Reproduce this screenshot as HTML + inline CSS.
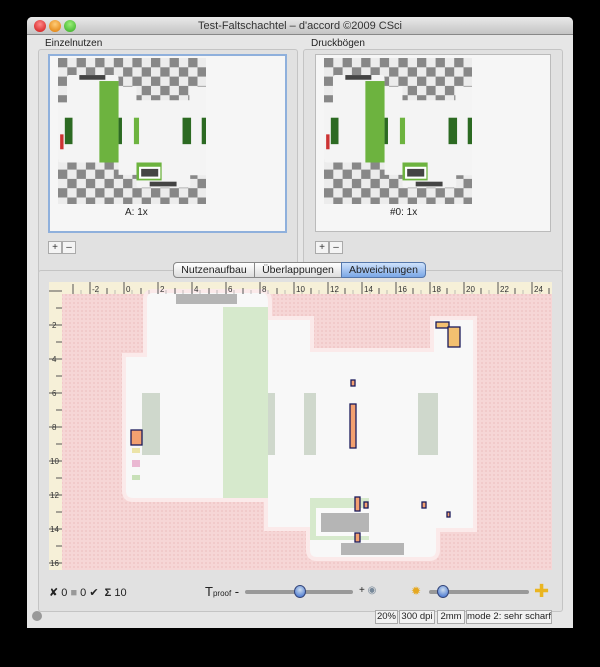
<!DOCTYPE html>
<html><head><meta charset="utf-8"><style>
*{margin:0;padding:0;box-sizing:border-box}
body{width:600px;height:667px;background:#000;position:relative;overflow:hidden;font-family:"Liberation Sans",sans-serif;font-size:10px;color:#222}
.a{position:absolute}
.win{left:27px;top:17px;width:546px;height:611px;background:#e6e6e6;border-radius:5px 5px 0 0;overflow:hidden}
.tb{left:0;top:0;width:546px;height:18px;background:linear-gradient(#e9e9e9,#c4c4c4);border-bottom:1px solid #888;text-align:center;font-size:11px;line-height:18px;color:#333}
.dot{width:12px;height:12px;border-radius:50%;top:3px}
.grp{border:1px solid #c4c4c4;background:#e1e1e1;border-radius:3px}
.pan{background:#f6f6f6;border:1px solid #bbb}
.btn{width:14px;height:13px;background:#f4f4f4;border:1px solid #aaa;font-size:10px;line-height:11px;text-align:center;color:#333}
.tab{top:245px;height:16px;border:1px solid #888;background:linear-gradient(#fff,#ddd);font-size:10.5px;line-height:14px;text-align:center}
.st{top:593px;height:14px;border:1px solid #aaa;background:#f2f2f2;font-size:9.5px;line-height:12px;text-align:center}
</style></head><body>
<svg width="0" height="0" style="position:absolute"><defs>
<pattern id="ck" width="18.6" height="18.6" patternUnits="userSpaceOnUse"><rect width="18.6" height="18.6" fill="#ececec"/><rect width="9.3" height="9.3" fill="#888"/><rect x="9.3" y="9.3" width="9.3" height="9.3" fill="#888"/></pattern>
<pattern id="pk" width="4" height="4" patternUnits="userSpaceOnUse"><rect width="4" height="4" fill="#f6d6d6"/><rect width="2" height="2" fill="#f1caca"/></pattern>
<path id="die" d="M104 11H213Q219 11 219 20V38H261V70H385V38H424V246H387V268Q387 275 380 275H268Q261 275 261 268V245H219V216H84Q77 216 77 209V75H98V17Q98 11 104 11Z"/>
<g id="th">
<rect width="148" height="146" fill="url(#ck)"/>
<g transform="scale(0.4265) translate(-77,29)">
 <use href="#die" fill="#f4f4f4"/>
 <rect x="174" y="25" width="45" height="191" fill="#6db33f"/>
 <rect x="93" y="111" width="18" height="62" fill="#2c6a22"/><rect x="219" y="111" width="8" height="62" fill="#2c6a22"/><rect x="255" y="111" width="12" height="62" fill="#6db33f"/><rect x="369" y="111" width="20" height="62" fill="#2c6a22"/><rect x="414" y="111" width="10" height="62" fill="#2c6a22"/>
 <rect x="261" y="216" width="59" height="42" fill="#6db33f"/><rect x="267" y="226" width="50" height="28" fill="#fff"/>
 <rect x="272" y="231" width="40" height="18" fill="#444"/><rect x="292" y="261" width="63" height="11" fill="#444"/><rect x="127" y="11" width="61" height="11" fill="#444"/>
 <rect x="82" y="150" width="8" height="35" fill="#c33"/>
</g>
</g></defs></svg>
<div class="a win">
 <div class="a tb">Test-Faltschachtel – d'accord ©2009 CSci</div>
 <div class="a dot" style="left:7px;background:radial-gradient(circle at 50% 35%,#f88,#c11)"></div>
 <div class="a dot" style="left:22px;background:radial-gradient(circle at 50% 35%,#fc7,#d70)"></div>
 <div class="a dot" style="left:37px;background:radial-gradient(circle at 50% 35%,#9e7,#3a2)"></div>
 <div class="a" style="left:18px;top:21px">Einzelnutzen</div>
 <div class="a" style="left:284px;top:21px">Druckbögen</div>
 <div class="a grp" style="left:11px;top:32px;width:260px;height:225px"></div>
 <div class="a grp" style="left:276px;top:32px;width:260px;height:225px"></div>
 <div class="a pan" style="left:21px;top:37px;width:239px;height:179px;border:2px solid #8fb0dc"></div>
 <div class="a pan" style="left:288px;top:37px;width:236px;height:178px"></div>
 <svg class="a" style="left:31px;top:41px" width="148" height="146"><use href="#th"/></svg>
 <svg class="a" style="left:297px;top:41px" width="148" height="146"><use href="#th"/></svg>
 <div class="a" style="left:98px;top:190px;font-size:10px">A: 1x</div>
 <div class="a" style="left:363px;top:190px;font-size:10px">#0: 1x</div>
 <div class="a btn" style="left:21px;top:224px">+</div><div class="a btn" style="left:35px;top:224px">–</div>
 <div class="a btn" style="left:288px;top:224px">+</div><div class="a btn" style="left:302px;top:224px">–</div>
 <div class="a grp" style="left:11px;top:253px;width:525px;height:342px"></div>
 <div class="a tab" style="left:146px;width:82px;border-radius:4px 0 0 4px">Nutzenaufbau</div>
 <div class="a tab" style="left:227px;width:88px">Überlappungen</div>
 <div class="a tab" style="left:314px;width:85px;border-radius:0 4px 4px 0;background:linear-gradient(#cfe2fb,#7aa7e6);border-color:#5577aa">Abweichungen</div>
 <svg class="a" style="left:22px;top:265px" width="503" height="288">
  <rect width="503" height="288" fill="#f6f0d8"/>
  <rect x="13" y="12" width="490" height="276" fill="url(#pk)"/>
  <use href="#die" fill="#f8f8f8" stroke="#fbeaea" stroke-width="8"/>
  <use href="#die" fill="#f8f8f8"/>
  <rect x="174" y="25" width="45" height="191" fill="#d6e9cc"/>
  <rect x="93" y="111" width="18" height="62" fill="#cfd8cc"/><rect x="219" y="111" width="7" height="62" fill="#cfd8cc"/><rect x="255" y="111" width="12" height="62" fill="#cfd8cc"/><rect x="369" y="111" width="20" height="62" fill="#cfd8cc"/>
  <rect x="261" y="216" width="59" height="42" fill="#d6e9cc"/><rect x="267" y="226" width="53" height="28" fill="#fafafa"/>
  <g fill="#b5b5b5"><rect x="127" y="12" width="61" height="10"/><rect x="272" y="231" width="48" height="19"/><rect x="292" y="261" width="63" height="12"/></g>
  <g stroke="#1a1a5a" stroke-width="1.3">
   <rect x="82" y="148" width="11" height="15" fill="#f3a070"/><rect x="387" y="40" width="13" height="6" fill="#f3c070"/><rect x="399" y="45" width="12" height="20" fill="#f3c070"/>
   <rect x="302" y="98" width="4" height="6" fill="#f3a070"/><rect x="301" y="122" width="6" height="44" fill="#f3a070"/>
   <rect x="306" y="215" width="5" height="14" fill="#f3a070"/><rect x="315" y="220" width="4" height="6" fill="#f3a070"/><rect x="373" y="220" width="4" height="6" fill="#f3a070"/><rect x="398" y="230" width="3" height="5" fill="#f3a070"/><rect x="306" y="251" width="5" height="9" fill="#f3a070"/>
  </g>
  <rect x="83" y="166" width="8" height="5" fill="#ece4a8"/><rect x="83" y="178" width="8" height="7" fill="#eab8d2"/><rect x="83" y="193" width="8" height="5" fill="#c8e0b8"/>
  <g stroke="#555" stroke-width="1">
   <path d="M24 2V12M41 0V12M58 6V12M75 0V12M92 6V12M109 0V12M126 6V12M143 0V12M160 6V12M177 0V12M194 6V12M211 0V12M228 6V12M245 0V12M262 6V12M279 0V12M296 6V12M313 0V12M330 6V12M347 0V12M364 6V12M381 0V12M398 6V12M415 0V12M432 6V12M449 0V12M466 6V12M483 0V12M500 6V12"/>
   <path d="M0 9H13M7 26H13M0 43H13M7 60H13M0 77H13M7 94H13M0 111H13M7 128H13M0 145H13M7 162H13M0 179H13M7 196H13M0 213H13M7 230H13M0 247H13M7 264H13M0 281H13"/>
  </g>
  <g stroke="#999" stroke-width=".6"><path d="M32 8V12M49 8V12M66 8V12M83 8V12M100 8V12M117 8V12M134 8V12M151 8V12M168 8V12M185 8V12M202 8V12M219 8V12M236 8V12M253 8V12M270 8V12M287 8V12M304 8V12M321 8V12M338 8V12M355 8V12M372 8V12M389 8V12M406 8V12M423 8V12M440 8V12M457 8V12M474 8V12M491 8V12"/></g>
  <g font-size="8" fill="#333" font-family="Liberation Sans">
   <text x="43" y="10">-2</text><text x="77" y="10">0</text><text x="111" y="10">2</text><text x="145" y="10">4</text><text x="179" y="10">6</text><text x="213" y="10">8</text><text x="247" y="10">10</text><text x="281" y="10">12</text><text x="315" y="10">14</text><text x="349" y="10">16</text><text x="383" y="10">18</text><text x="417" y="10">20</text><text x="451" y="10">22</text><text x="485" y="10">24</text>
   <text x="3" y="46">2</text><text x="3" y="80">4</text><text x="3" y="114">6</text><text x="3" y="148">8</text><text x="1" y="182">10</text><text x="1" y="216">12</text><text x="1" y="250">14</text><text x="1" y="284">16</text>
  </g>
 </svg>
 <div class="a" style="left:22px;top:569px;font-size:11px;width:130px">✘ 0 <span style="color:#999">■</span> 0 ✔ &nbsp;<b>Σ</b> 10</div>
 <div class="a" style="left:178px;top:567px;font-size:13px">T<span style="font-size:8px">proof</span> -</div>
 <div class="a" style="left:218px;top:573px;width:108px;height:4px;background:#999;border-radius:2px"></div>
 <div class="a" style="left:267px;top:568px;width:12px;height:13px;border-radius:50%;background:radial-gradient(circle at 50% 35%,#cde,#36c);border:1px solid #347"></div>
 <div class="a" style="left:332px;top:568px;font-size:10px">+ <span style="color:#789">◉</span></div>
 <div class="a" style="left:384px;top:567px;color:#e5a820;font-size:12px">✹</div>
 <div class="a" style="left:402px;top:573px;width:100px;height:4px;background:#999;border-radius:2px"></div>
 <div class="a" style="left:410px;top:568px;width:12px;height:13px;border-radius:50%;background:radial-gradient(circle at 50% 35%,#cde,#36c);border:1px solid #347"></div>
 <div class="a" style="left:507px;top:564px;color:#eab520;font-size:18px">✚</div>
 <div class="a" style="left:5px;top:594px;width:10px;height:10px;border-radius:50%;background:#999"></div>
 <div class="a st" style="left:348px;width:23px">20%</div>
 <div class="a st" style="left:372px;width:36px">300 dpi</div>
 <div class="a st" style="left:410px;width:28px">2mm</div>
 <div class="a st" style="left:439px;width:86px">mode 2: sehr scharf</div>
</div>
</body></html>
